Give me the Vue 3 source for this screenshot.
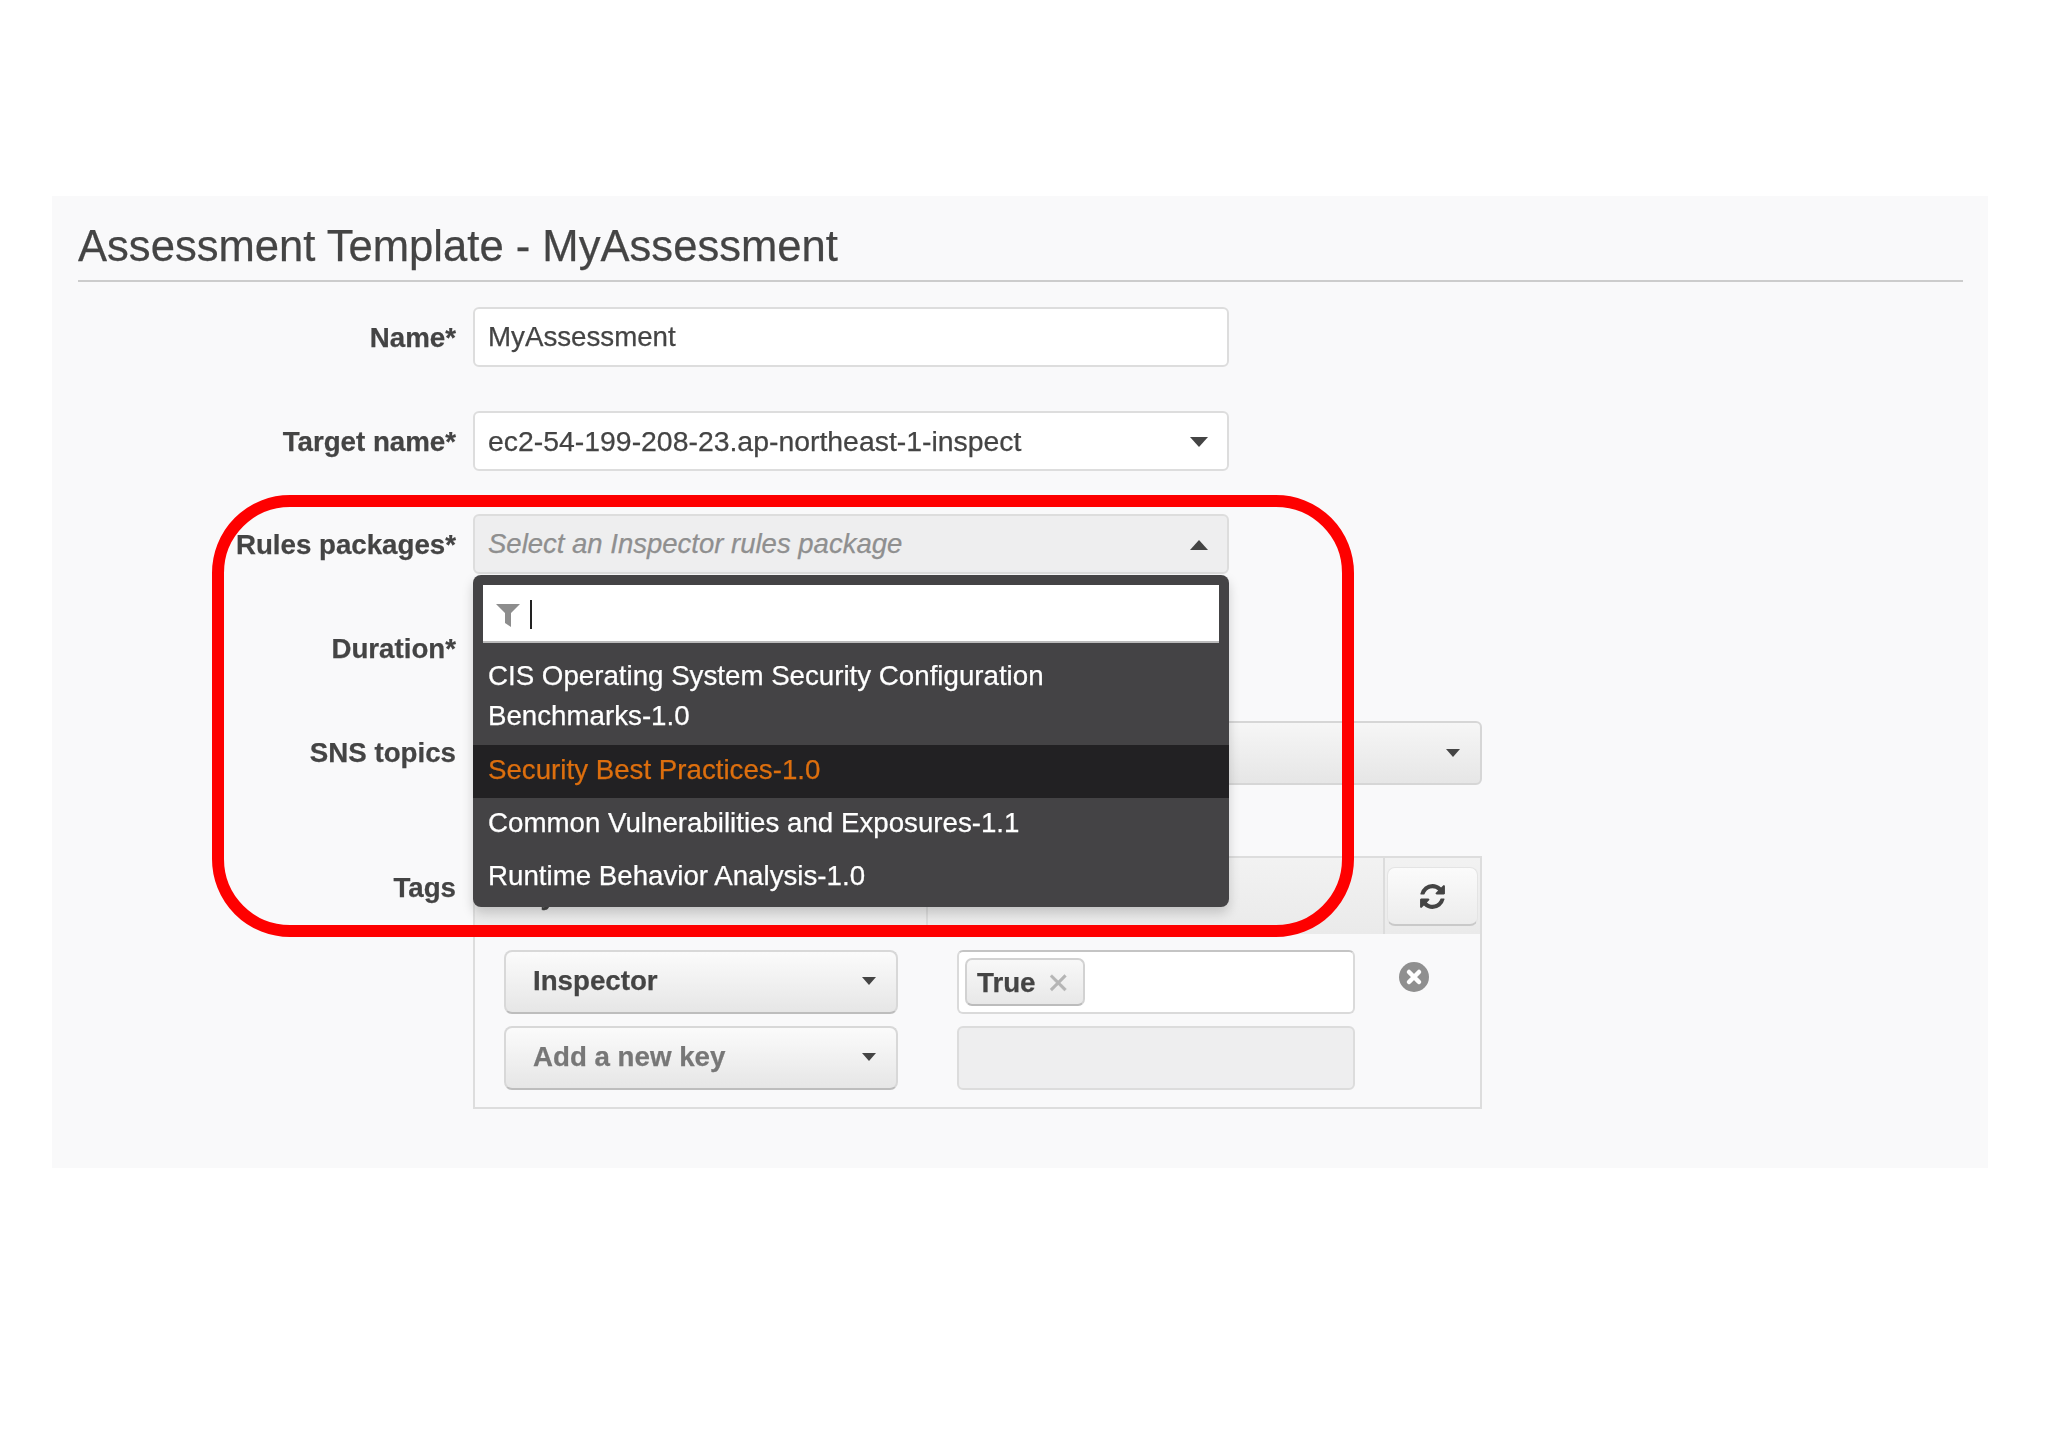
<script setup>
const packages = [
  { name: 'CIS Operating System Security Configuration Benchmarks-1.0' },
  { name: 'Security Best Practices-1.0', active: true },
  { name: 'Common Vulnerabilities and Exposures-1.1' },
  { name: 'Runtime Behavior Analysis-1.0' },
]
</script>

<template>
  <div class="page">
    <section class="panel">
      <div class="content">
        <h1 class="title">Assessment Template - MyAssessment</h1>

        <div class="row">
          <label class="label">Name*</label>
          <div class="field input">MyAssessment</div>
        </div>

        <div class="row">
          <label class="label">Target name*</label>
          <div class="field input with-caret">
            <span class="target">ec2-54-199-208-23.ap-northeast-1-inspect</span>
            <i class="caret"></i>
          </div>
        </div>

        <div class="row rules">
          <label class="label">Rules packages*</label>
          <div class="field-wrap">
            <div class="field input disabled with-caret">
              <em>Select an Inspector rules package</em>
              <i class="caret up"></i>
            </div>
            <div class="menu">
              <div class="search">
                <svg class="funnel" viewBox="0 0 24 24"><path d="M0 1h24L15 10v14l-6-4V10z" /></svg>
                <span class="cursor"></span>
              </div>
              <ul class="list">
                <li v-for="p in packages" :key="p.name" :class="{ active: p.active }">{{ p.name }}</li>
              </ul>
            </div>
          </div>
        </div>

        <div class="row">
          <label class="label">Duration*</label>
          <div class="field input"></div>
        </div>

        <div class="row sns">
          <label class="label sns-label">SNS topics</label>
          <div class="field select-wide with-caret">
            <span></span>
            <i class="caret small"></i>
          </div>
        </div>

        <div class="row tags-row">
          <label class="label tags-label">Tags</label>
          <div class="tags">
            <div class="tags-head">
              <div class="col key">Key</div>
              <div class="col value">Value</div>
              <div class="col action">
                <button class="refresh" type="button" aria-label="Refresh">
                  <svg viewBox="0 0 1792 1792"><path d="M1639 1056q0 5-1 7-64 268-268 434.5t-478 166.5q-146 0-282.5-55t-243.5-157l-129 129q-19 19-45 19t-45-19-19-45v-448q0-26 19-45t45-19h448q26 0 45 19t19 45-19 45l-137 137q71 66 161 102t187 36q134 0 250-65t186-179q11-17 53-117 8-23 30-23h192q13 0 22.5 9.5t9.5 22.5zm25-800v448q0 26-19 45t-45 19h-448q-26 0-45-19t-19-45 19-45l138-138q-148-137-349-137-134 0-250 65t-186 179q-11 17-53 117-8 23-30 23h-199q-13 0-22.5-9.5t-9.5-22.5v-7q65-268 270-434.5t480-166.5q146 0 284 55.5t245 156.5l130-129q19-19 45-19t45 19 19 45z" /></svg>
                </button>
              </div>
            </div>
            <div class="tags-body">
              <div class="tag-row">
                <div class="btn-select">Inspector<i class="caret small"></i></div>
                <div class="tag-value">
                  <span class="chip">True<span class="chip-x">✕</span></span>
                </div>
                <svg class="remove" viewBox="0 0 30 30">
                  <circle cx="15" cy="15" r="15" />
                  <path d="M10 10l10 10M20 10L10 20" />
                </svg>
              </div>
              <div class="tag-row">
                <div class="btn-select muted">Add a new key<i class="caret small"></i></div>
                <div class="tag-value empty"></div>
              </div>
            </div>
          </div>
        </div>
      </div>

      <div class="ring"></div>
    </section>
  </div>
</template>

<style>
html, body { background: #fff; }
</style>

<style scoped>
.page {
  width: 2048px;
  height: 1447px;
  padding: 196px 60px 0 52px;
  box-sizing: border-box;
  font-family: "Liberation Sans", Arial, sans-serif;
  color: #444;
  font-size: 27.7px;
}
.panel {
  position: relative;
  height: 972px;
  box-sizing: border-box;
  padding: 0 25px 0 26px;
  background: #f9f9fa;
}
.content {
  filter: blur(0.5px);
  -webkit-text-stroke: 0.25px;
}
.title {
  height: 84px;
  margin: 0 0 25px;
  box-sizing: content-box;
  border-bottom: 2px solid #ccc;
  font-size: 43.6px;
  font-weight: 400;
  line-height: 100px;
  color: #444;
}
.row {
  display: flex;
  align-items: center;
  margin-bottom: 44px;
}
.rules { margin-top: -1px; }
.sns { margin-top: -1px; margin-bottom: 71px; }
.label {
  flex: 0 0 378px;
  margin-right: 17px;
  padding-top: 2px;
  text-align: right;
  font-weight: 700;
  color: #444;
  white-space: nowrap;
}
.sns-label { padding-top: 0; }
.field {
  width: 756px;
  height: 60px;
  box-sizing: border-box;
  padding: 0 13px;
  border: 2px solid #ddd;
  border-radius: 6px;
  display: flex;
  align-items: center;
}
.field-wrap {
  position: relative;
  z-index: 2;
  width: 756px;
}
.input { background: #fff; }
.with-caret { justify-content: space-between; }
.target { font-size: 28.4px; }
.disabled {
  background: #eeeeef;
  color: #8f8f8f;
}
.disabled em { font-style: italic; font-size: 27.5px; }
.caret {
  width: 0;
  height: 0;
  margin: 2px 6px 0 0;
  border-left: 9px solid transparent;
  border-right: 9px solid transparent;
  border-top: 10px solid #444;
}
.caret.up {
  border-top: 0;
  border-bottom: 10px solid #444;
}
.caret.small {
  margin: 0;
  border-left-width: 7px;
  border-right-width: 7px;
  border-top-width: 8px;
}
.menu {
  position: absolute;
  top: 61px;
  left: 0;
  right: 0;
  height: 332px;
  padding: 10px 0 0;
  box-sizing: border-box;
  background: #444345;
  border-radius: 8px;
  box-shadow: 0 6px 12px rgba(0, 0, 0, 0.18);
}
.search {
  height: 58px;
  margin: 0 10px;
  padding: 3px 0 0 13px;
  background: #fff;
  border-bottom: 2px solid #bbb;
  box-sizing: border-box;
  display: flex;
  align-items: center;
  gap: 10px;
}
.funnel {
  width: 24px;
  height: 24px;
  fill: #8d8d8d;
}
.cursor {
  width: 2px;
  height: 29px;
  background: #222;
}
.list {
  list-style: none;
  margin: 0;
  padding: 6px 0 0;
}
.list li {
  padding: 5px 60px 8px 15px;
  line-height: 40px;
  color: #fff;
}
.list li:first-child {
  padding-top: 7px;
  padding-bottom: 9px;
}
.list li.active {
  background: #222123;
  color: #dd6f0e;
}
.select-wide {
  width: 1009px;
  height: 64px;
  border-color: #d6d6d6;
  background: linear-gradient(#f6f6f6, #e6e6e6);
  padding-right: 20px;
}
.tags-row { align-items: flex-start; margin-bottom: 0; }
.tags-label { margin-top: 14px; }
.tags {
  width: 1009px;
  height: 253px;
  box-sizing: border-box;
  border: 2px solid #ddd;
}
.tags-head {
  display: flex;
  height: 76px;
  background: linear-gradient(#f2f2f2, #eaeaea);
}
.col {
  box-sizing: border-box;
  padding: 21px 15px 0 30px;
  font-weight: 700;
}
.key { width: 453px; border-right: 2px solid #dcdcdc; }
.value { width: 457px; border-right: 2px solid #dcdcdc; }
.action { flex: 1; padding: 9px 0 0 2px; }
.refresh {
  display: flex;
  align-items: center;
  justify-content: center;
  width: 91px;
  height: 59px;
  padding: 0;
  border: 1px solid #e4e4e4;
  border-bottom: 2px solid #c9c9c9;
  border-radius: 8px;
  background: linear-gradient(#fbfbfb, #ececec);
}
.refresh svg {
  width: 29px;
  height: 29px;
  fill: #444;
}
.tags-body { padding: 16px 0 0 29px; }
.tag-row {
  display: flex;
  align-items: flex-start;
  margin-bottom: 12px;
}
.btn-select {
  width: 394px;
  height: 64px;
  box-sizing: border-box;
  padding: 0 20px 2px 27px;
  display: flex;
  align-items: center;
  justify-content: space-between;
  font-weight: 700;
  color: #444;
  border: 2px solid #d8d8d8;
  border-bottom-color: #bdbdbd;
  border-radius: 8px;
  background: linear-gradient(#fbfbfb, #e6e6e6);
}
.btn-select.muted { color: #777; }
.tag-value {
  width: 398px;
  height: 64px;
  margin-left: 59px;
  box-sizing: border-box;
  padding: 6px 0 0 6px;
  background: #fff;
  border: 2px solid #dadada;
  border-top-color: #c4c4c4;
  border-radius: 6px;
}
.tag-value.empty {
  background: #eeeeef;
  border-color: #dcdcdc;
}
.chip {
  display: inline-flex;
  align-items: center;
  height: 48px;
  width: 120px;
  box-sizing: border-box;
  padding: 2px 0 0 10px;
  font-weight: 700;
  color: #444;
  border: 2px solid #d2d2d2;
  border-bottom-color: #bcbcbc;
  border-radius: 7px;
  background: linear-gradient(#f8f8f8, #e8e8e8);
}
.chip-x {
  margin-left: 11px;
  color: #b5b5b5;
  font-family: "DejaVu Sans", sans-serif;
  font-size: 28px;
  font-weight: 700;
}
.remove {
  width: 30px;
  height: 30px;
  margin: 12px 0 0 44px;
  fill: #8f8f8f;
}
.remove path {
  fill: none;
  stroke: #fff;
  stroke-width: 4.5;
  stroke-linecap: round;
}
.ring {
  position: absolute;
  left: 160px;
  top: 299px;
  width: 1142px;
  height: 442px;
  box-sizing: border-box;
  border: 12px solid #fe0000;
  border-radius: 78px;
  z-index: 3;
  pointer-events: none;
}
</style>
